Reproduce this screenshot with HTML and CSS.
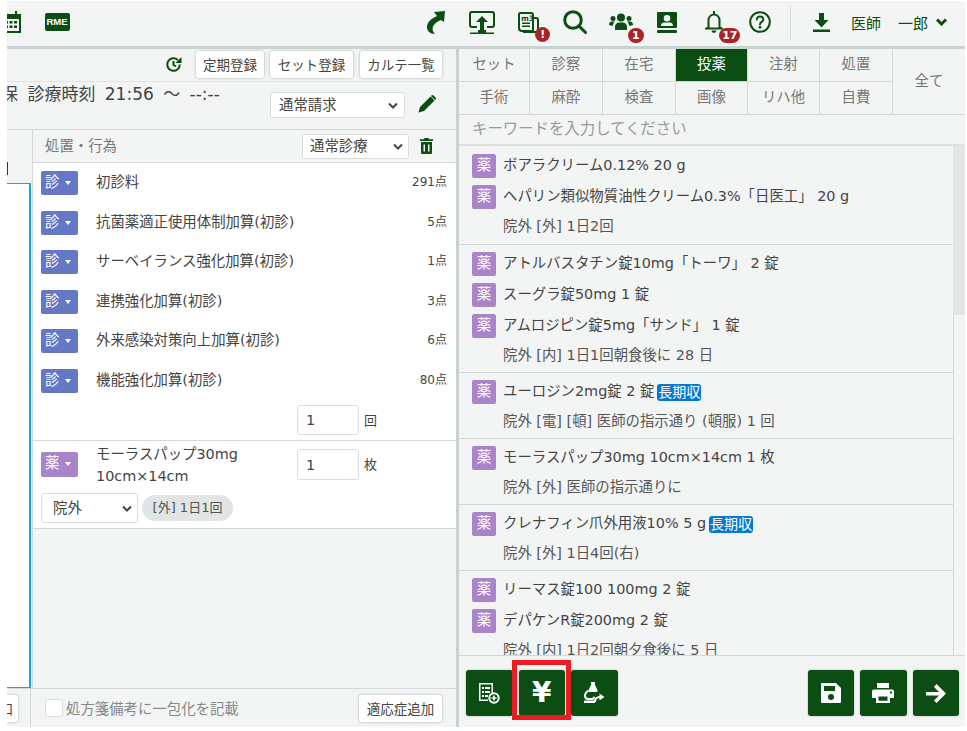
FILE: index.html
```html
<!DOCTYPE html>
<html lang="ja">
<head>
<meta charset="utf-8">
<title>カルテ</title>
<link rel="stylesheet" href="styles.css">
</head>
<body>
<div class="app">
  <header class="topbar">
    <div class="cell cell-cal"><svg width="20" height="22" viewBox="0 0 20 22"><path class="g" d="M4 0h2v3h8V0h2v3h4v19H0V3h4zM2 8v12h16V8z"/><path class="g" d="M4 10h3v2.500H4zM8.500 10h3v2.500h-3zM13 10h3v2.500h-3zM4 14.500h3V17H4zM8.500 14.500h3V17h-3zM13 14.500h3V17h-3z"/></svg></div>
    <div class="cell cell-rme"><span class="rme">RME</span></div>
    <div class="spacer"></div>
    <div class="cell"><svg width="18" height="23" viewBox="0 0 18 23"><path class="g" d="M18 0 7 1l3 4C3 8 0 12 0 16c0 4 3 7 8 7-3-3-3-7-1-9 2-3 5-4 7-5l3 2z"/></svg></div>
    <div class="cell"><svg width="26" height="23" viewBox="0 0 26 23"><path class="s" d="M8 16H3a2 2 0 0 1-2-2V3a2 2 0 0 1 2-2h20a2 2 0 0 1 2 2v11a2 2 0 0 1-2 2h-5"/><path class="g" d="M13 5l6 6h-4v8h2v2.500h8V23H1v-1.500h8V19h2v-8H7z"/></svg></div>
    <div class="cell has-badge"><svg width="23" height="21" viewBox="0 0 23 21"><path class="s" d="M3 1h11a2 2 0 0 1 2 2v16H5a3 3 0 0 1-3-3V2z"/><path class="s" d="M16 6h3a2 2 0 0 1 2 2v10a2 2 0 0 1-2 2H6"/><text class="m3" x="4" y="8.500">m3</text><path class="g" d="M5 10.500h8V12H5zM5 13.500h8V15H5z"/></svg><span class="badge badge-excl">!</span></div>
    <div class="cell"><svg width="24" height="24" viewBox="0 0 24 24"><circle class="s3" cx="10" cy="10" r="8.300"/><path class="s3 cap" d="M16 16l6.500 6.500"/></svg></div>
    <div class="cell has-badge"><svg width="24" height="18" viewBox="0 0 24 18"><circle class="g" cx="12" cy="4.500" r="4"/><circle class="g" cx="4" cy="5.500" r="2.500"/><circle class="g" cx="20" cy="5.500" r="2.500"/><path class="g" d="M6 17v-3c0-3 2-4.500 4-4.500h4c2 0 4 1.500 4 4.500v3zM0 12c0-2 1-3.500 3-3.500h3c-1.300 1-2 2.500-2.200 4.500zM24 12c0-2-1-3.500-3-3.500h-3c1.300 1 2 2.500 2.200 4.500z"/></svg><span class="badge badge-one">1</span></div>
    <div class="cell"><svg width="20" height="21" viewBox="0 0 20 21"><path class="g" fill-rule="evenodd" d="M1 0h18a1 1 0 0 1 1 1v14a1 1 0 0 1-1 1H1a1 1 0 0 1-1-1V1a1 1 0 0 1 1-1zm9 3a3.300 3.300 0 1 0 0 6.600A3.300 3.300 0 0 0 10 3zM4 14h12c0-2.500-1.500-3.500-3-3.500H7c-1.500 0-3 1-3 3.500z"/><rect class="g" y="18" width="20" height="3" rx="1"/></svg></div>
    <div class="cell has-badge"><svg width="18" height="22" viewBox="0 0 18 22"><path class="s" d="M3.500 16V9a5.500 5.500 0 0 1 11 0v7l2 1.500H1.500z"/><rect class="g" x="8" y="0" width="2" height="3"/><path class="g" d="M6.500 19.500h5a2.500 2.500 0 0 1-5 0z"/></svg><span class="badge badge-17">17</span></div>
    <div class="cell"><svg width="22" height="22" viewBox="0 0 22 22"><circle class="s" cx="11" cy="11" r="9.800"/><path class="s cap" d="M7.800 8.500C8 6.500 9.500 5.600 11 5.600c2 0 3.300 1.200 3.300 2.800 0 2.600-3.300 2.400-3.300 5"/><circle class="g" cx="11" cy="16.300" r="1.400"/></svg></div>
    <div class="vline"></div>
    <svg class="dl" width="17" height="19" viewBox="0 0 17 19"><path class="g" d="M6 0h5v7h4.500l-7 7.500-7-7.500H6zM0 16.500h17V19H0z"/></svg>
    <span class="user">医師</span>
    <span class="user user-name">一郎</span>
    <svg class="chev" width="11" height="8" viewBox="0 0 11 8"><path class="s3" d="M1 1.500l4.500 4.500L10 1.500"/></svg>
  </header>

  <main class="panes">
    <section class="left">
      <div class="tools">
        <svg width="17" height="17" viewBox="0 0 17 17"><path class="s" d="M14.800 8.500a6.300 6.300 0 1 1-2-4.600"/><path class="g" d="M16.500 1v6h-6z"/><path class="s" d="M8.500 5v4l2.500 1.500"/></svg>
        <button class="btn btn-a">定期登録</button>
        <button class="btn btn-b">セット登録</button>
        <button class="btn btn-c">カルテ一覧</button>
      </div>
      <div class="visit">
        <div class="visit-text">保&nbsp;診療時刻 21:56 〜 --:--</div>
        <select class="sel sel-claim"><option>通常請求</option></select>
        <svg class="pencil" width="18" height="18" viewBox="0 0 18 18"><path class="g" d="M12.500 1.500l4 4L6 16l-5.500 1.500L2 12zM13.500.5a1.500 1.500 0 0 1 2 0l2 2a1.500 1.500 0 0 1 0 2l-.5.500-4-4z"/></svg>
      </div>
      <div class="work">
        <aside class="side">
          <div class="side-head"><span class="side-frag"></span></div>
          <div class="side-box"></div>
        </aside>
        <div class="acts">
          <div class="acts-head">
            <span class="acts-title">処置・行為</span>
            <select class="sel sel-kind"><option>通常診療</option></select>
            <svg width="13" height="16" viewBox="0 0 13 16"><path class="g" d="M4.500 0h4l.7 1.300H13V3H0V1.300h3.800zM1 4h11v11a1 1 0 0 1-1 1H2a1 1 0 0 1-1-1zm2.500 2.500v7h1.500v-7zm4.500 0v7h1.500v-7z"/></svg>
          </div>
          <div class="acts-body">
            <div class="order order-first">
              <div class="act"><span class="kind kind-exam">診<i></i></span><span class="act-name">初診料</span><span class="pts">291点</span></div>
              <div class="act"><span class="kind kind-exam">診<i></i></span><span class="act-name">抗菌薬適正使用体制加算(初診)</span><span class="pts">5点</span></div>
              <div class="act"><span class="kind kind-exam">診<i></i></span><span class="act-name">サーベイランス強化加算(初診)</span><span class="pts">1点</span></div>
              <div class="act"><span class="kind kind-exam">診<i></i></span><span class="act-name">連携強化加算(初診)</span><span class="pts">3点</span></div>
              <div class="act"><span class="kind kind-exam">診<i></i></span><span class="act-name">外来感染対策向上加算(初診)</span><span class="pts">6点</span></div>
              <div class="act"><span class="kind kind-exam">診<i></i></span><span class="act-name">機能強化加算(初診)</span><span class="pts">80点</span></div>
              <div class="qty-row"><input class="qty" value="1"><span class="unit">回</span></div>
            </div>
            <div class="order order-drug">
              <div class="drug-top">
                <span class="kind kind-drug">薬<i></i></span>
                <span class="drug-name">モーラスパップ30mg<br>10cm×14cm</span>
                <input class="qty qty-drug" value="1"><span class="unit">枚</span>
              </div>
              <div class="drug-use">
                <select class="sel sel-out"><option>院外</option></select>
                <span class="chip">[外] 1日1回</span>
              </div>
            </div>
          </div>
        </div>
      </div>
      <footer class="foot">
        <div class="foot-side"><button class="btn btn-frag">口</button></div>
        <div class="foot-main">
          <label class="check"><span class="box"></span>処方箋備考に一包化を記載</label>
          <button class="btn btn-add">適応症追加</button>
        </div>
      </footer>
    </section>

    <section class="right">
      <nav class="tabs">
        <a>セット</a><a>診察</a><a>在宅</a><a class="on">投薬</a><a>注射</a><a>処置</a><a class="all">全て</a>
        <a>手術</a><a>麻酔</a><a>検査</a><a>画像</a><a>リハ他</a><a>自費</a>
      </nav>
      <div class="search">キーワードを入力してください</div>
      <div class="history">
        <div class="rx-list">
          <div class="rx rx-first">
            <div class="rx-row"><span class="mark">薬</span>ボアラクリーム0.12% 20 g</div>
            <div class="rx-row"><span class="mark">薬</span>ヘパリン類似物質油性クリーム0.3%「日医工」 20 g</div>
            <div class="rx-note">院外 [外] 1日2回</div>
          </div>
          <div class="rx">
            <div class="rx-row"><span class="mark">薬</span>アトルバスタチン錠10mg「トーワ」 2 錠</div>
            <div class="rx-row"><span class="mark">薬</span>スーグラ錠50mg 1 錠</div>
            <div class="rx-row"><span class="mark">薬</span>アムロジピン錠5mg「サンド」 1 錠</div>
            <div class="rx-note">院外 [内] 1日1回朝食後に 28 日</div>
          </div>
          <div class="rx">
            <div class="rx-row"><span class="mark">薬</span>ユーロジン2mg錠 2 錠<span class="long">長期収</span></div>
            <div class="rx-note">院外 [電] [頓] 医師の指示通り (頓服) 1 回</div>
          </div>
          <div class="rx">
            <div class="rx-row"><span class="mark">薬</span>モーラスパップ30mg 10cm×14cm 1 枚</div>
            <div class="rx-note">院外 [外] 医師の指示通りに</div>
          </div>
          <div class="rx">
            <div class="rx-row"><span class="mark">薬</span>クレナフィン爪外用液10% 5 g<span class="long">長期収</span></div>
            <div class="rx-note">院外 [外] 1日4回(右)</div>
          </div>
          <div class="rx">
            <div class="rx-row"><span class="mark">薬</span>リーマス錠100 100mg 2 錠</div>
            <div class="rx-row"><span class="mark">薬</span>デパケンR錠200mg 2 錠</div>
            <div class="rx-note">院外 [内] 1日2回朝夕食後に 5 日</div>
          </div>
        </div>
        <div class="track"><div class="thumb"></div></div>
      </div>
      <div class="actions">
        <button class="act-btn"><svg width="22" height="22" viewBox="0 0 22 22"><path class="wf" fill-rule="evenodd" d="M1 1h14v11h-1.500V2.500h-11v15H10V19H1zM4 5h2v2H4zM7 5h5v2H7zM4 9h2v2H4zM7 9h5v2H7zM4 13h2v2H4zM7 13h3v2H7z"/><circle class="ws" cx="16" cy="16" r="4.700"/><path class="wf" d="M15.200 13.500h1.600v1.700h1.700v1.600h-1.700v1.700h-1.600v-1.700h-1.700v-1.600h1.700z"/></svg></button>
        <button class="act-btn act-yen"><span class="yen">¥</span></button>
        <button class="act-btn"><svg width="22" height="23" viewBox="0 0 22 23"><path class="wf" d="M8 0h4v1.500h-.6l3 6.500c.5 1 0 2-1 2H6.600c-1 0-1.500-1-1-2l3-6.500H8z"/><path class="ws" d="M5.500 8.500C3 10 2 11.500 2 13.500c0 2 1.500 3.500 3.500 3.500H9c1 0 2-1 2-2.200"/><path class="wf" d="M1 18.500h11V21H1z"/><path class="ws" d="M12 20c0-3 1.500-5 5-5"/><path class="wf" d="M16.500 11.500l5 3.500-5 3.500z"/></svg></button>
        <div class="spacer"></div>
        <button class="act-btn"><svg width="20" height="20" viewBox="0 0 20 20"><path class="wf" fill-rule="evenodd" d="M1 0h14l5 5v14a1 1 0 0 1-1 1H1a1 1 0 0 1-1-1V1a1 1 0 0 1 1-1zm2 3v5h11V3zm7 8a3 3 0 1 0 0 6 3 3 0 0 0 0-6z"/></svg></button>
        <button class="act-btn"><svg width="22" height="20" viewBox="0 0 22 20"><path class="wf" fill-rule="evenodd" d="M5 0h12v5H5zM2 6.500h18a2 2 0 0 1 2 2V15h-4v5H4v-5H0V8.500a2 2 0 0 1 2-2zM6.500 13.500v4.300h9v-4.300zM18 8.500v2h2v-2z"/></svg></button>
        <button class="act-btn"><svg width="22" height="19" viewBox="0 0 22 19"><path class="wf" d="M11.500 0l9.500 9.500-9.500 9.500-2.500-2.500 5-5H1V8h13L9 3z"/></svg></button>
      </div>
    </section>
  </main>
</div>
</body>
</html>
```

FILE: styles.css
```css
* { box-sizing: border-box; }
html, body { margin: 0; padding: 0; height: 100%; overflow: hidden; background: #fff; }
body { font-family: "DejaVu Sans", "Noto Sans CJK JP", sans-serif; font-size: 14.400px; color: #444; }
button, select, input { font-family: inherit; }

.app { margin: 1px 2px 0 7px; height: 726px; display: flex; flex-direction: column; overflow: hidden; background: #f3f5f4; }

.g { fill: #0b4d12; }
.s { fill: none; stroke: #0b4d12; stroke-width: 2; }
.s3 { fill: none; stroke: #0b4d12; stroke-width: 3; }
.cap { stroke-linecap: round; }
.m3 { font-size: 7.500px; font-weight: 700; fill: #0b4d12; font-family: "DejaVu Sans", sans-serif; }
.wf { fill: #fff; }
.ws { fill: none; stroke: #fff; stroke-width: 2; }

.topbar { height: 45px; flex: none; display: flex; align-items: center; padding: 0 12px 3px 0; }
.cell { position: relative; width: 46.300px; height: 42px; flex: none; display: flex; align-items: center; justify-content: center; }
.cell-cal { margin-left: -16px; margin-right: 3px; width: 40px; }
.cell-rme { width: 46px; }
.rme { display: block; width: 25px; height: 18px; border-radius: 2px; background: #0b4d12; color: #fff; font-size: 9.500px; font-weight: 700; line-height: 18px; text-align: center; font-family: "Liberation Sans", sans-serif; }
.spacer { flex: 1; }
.badge { position: absolute; background: #a92329; color: #fff; font-weight: 700; font-size: 11px; line-height: 15px; height: 15px; text-align: center; border-radius: 8px; font-family: "DejaVu Sans", sans-serif; }
.badge-excl { width: 15px; left: 30px; top: 26px; }
.badge-one { width: 16px; left: 30px; top: 27px; }
.badge-17 { width: 21px; left: 29px; top: 27px; }
.vline { width: 1px; height: 33px; background: #d9dedc; margin: 0 22px 0 7px; flex: none; }
.dl { flex: none; margin-right: 21px; }
.user { color: #0b4d12; font-size: 15px; margin-right: 17px; flex: none; }
.user-name { margin-right: 8px; }
.chev { flex: none; margin-right: 6px; }

.panes { flex: 1; min-height: 0; display: flex; border-top: 3px solid #c9d3d0; }
.left { width: 452px; flex: none; display: flex; flex-direction: column; border-right: 3px solid #c9d3d0; }
.right { flex: 1; min-width: 0; display: flex; flex-direction: column; }

.tools { height: 33px; flex: none; display: flex; align-items: center; justify-content: flex-end; padding: 0 14px 2px 0; border-bottom: 1px solid #e0e5e3; }
.tools svg { margin-right: 14px; }
.btn { background: #fff; border: 0; border-radius: 3px; box-shadow: 0 0 3px rgba(0,0,0,.3); color: #444; font-size: 13.500px; height: 27px; padding: 0; white-space: nowrap; flex: none; }
.btn-a { width: 68px; margin-right: 6px; }
.btn-b { width: 83px; margin-right: 7px; }
.btn-c { width: 82px; }

.visit { height: 48px; flex: none; display: flex; align-items: flex-start; border-bottom: 1px solid #d3d9d7; overflow: hidden; }
.visit-text { flex: 1; margin-left: -6px; font-size: 17px; word-spacing: 4px; line-height: 22px; margin-top: 1px; white-space: nowrap; color: #444; }
.sel { appearance: none; -webkit-appearance: none; background-color: #fff; background-repeat: no-repeat; background-image: url("data:image/svg+xml,%3Csvg xmlns='http://www.w3.org/2000/svg' width='10' height='7' viewBox='0 0 10 7'%3E%3Cpath d='M1 1.500l4 4 4-4' fill='none' stroke='%23444' stroke-width='2'/%3E%3C/svg%3E"); border: 1px solid #d9dedc; border-radius: 3px; color: #444; font-size: 14.400px; outline: 0; flex: none; }
.sel-claim { width: 135px; height: 26px; margin-top: 10px; padding: 0 0 0 8px; background-position: right 6px center; }
.pencil { margin: 13px 20px 0 13px; flex: none; }

.work { flex: 1; min-height: 0; display: flex; }
.side { width: 25px; flex: none; display: flex; flex-direction: column; }
.side-head { height: 53px; flex: none; }
.side-frag { display: block; width: 1px; height: 13px; margin-top: 32px; background: #0b4d12; }
.side-box { flex: 1; background: #fff; border: solid #17a8d8; border-width: 1px 2px 1px 0; margin-right: 1px; }
.acts { flex: 1; min-width: 0; display: flex; flex-direction: column; border-left: 1px solid #d3d9d7; }
.acts-head { height: 33px; flex: none; display: flex; align-items: center; border-bottom: 1px solid #d3d9d7; padding-left: 12px; }
.acts-title { width: 257px; color: #777; flex: none; margin-top: -3px; }
.sel-kind { width: 107px; height: 25px; padding: 0 0 0 7px; margin-right: 11px; background-position: right 5px center; }
.acts-body { flex: 1; min-height: 0; }
.order { background: #fff; border-bottom: 1px solid #d3d9d7; }
.order-first { height: 278px; padding-top: 8px; }
.act { height: 39.600px; display: flex; align-items: flex-start; padding: 0 9px 0 8px; }
.kind { position: relative; width: 37px; height: 24px; flex: none; border-radius: 2px; color: #fff; line-height: 22px; padding-left: 4px; }
.kind i { position: absolute; right: 7px; top: 10px; width: 0; height: 0; border: solid transparent; border-width: 4px 3.500px 0; border-top-color: #fff; }
.kind-exam { background: #6478c6; }
.kind-drug { background: #a984c9; }
.act-name { margin-left: 18px; flex: 1; line-height: 22px; white-space: nowrap; }
.pts { font-size: 12px; line-height: 22px; color: #444; }
.qty-row { display: flex; align-items: center; margin: -4px 0 0 264px; }
.qty { width: 62px; height: 30px; border: 1px solid #d9dedc; border-radius: 3px; padding: 0 8px; color: #444; font-size: 14.400px; outline: 0; background: #fff; flex: none; }
.unit { margin-left: 5px; font-size: 13px; }
.order-drug { height: 88px; padding: 8px 0 0 8px; }
.drug-top { display: flex; align-items: flex-start; height: 44px; }
.drug-top .kind { margin-top: 3px; height: 25px; }
.drug-name { width: 201px; margin-left: 18px; line-height: 22px; flex: none; margin-top: -8px; padding-top: 2px; white-space: nowrap; }
.qty-drug { height: 31px; }
.drug-top .unit { line-height: 31px; }
.drug-use { display: flex; align-items: center; gap: 4px; }
.sel-out { width: 97px; height: 30px; padding: 0 0 0 11px; background-position: right 5px center; }
.chip { height: 26px; line-height: 26px; width: 91px; border-radius: 13px; background: #e1e6e4; font-size: 13px; text-align: center; color: #555; white-space: nowrap; }

.foot { height: 39px; flex: none; display: flex; border-top: 1px solid #d3d9d7; }
.foot-side { width: 24px; flex: none; display: flex; align-items: center; overflow: hidden; border-right: 1px solid #d3d9d7; }
.btn-frag { width: 11px; text-indent: -12px; overflow: hidden; border-radius: 0 3px 3px 0; }
.foot-main { flex: 1; display: flex; align-items: center; justify-content: space-between; padding: 0 14px; }
.check { display: flex; align-items: center; color: #888; font-size: 14.400px; margin-top: -1px; }
.box { width: 18px; height: 18px; background: #fff; border: 1px solid #d9dedc; border-radius: 3px; margin-right: 3px; }
.btn-add { width: 83px; }

.tabs { flex: none; display: grid; grid-template-columns: 71px 73px 73px 72px 72px 73px 1fr; grid-template-rows: 33px 33px; }
.tabs a { display: flex; align-items: center; justify-content: center; padding-bottom: 5px; color: #777; font-size: 14.400px; border-right: 1px solid #d3d9d7; border-bottom: 1px solid #d3d9d7; }
.tabs .on { background: #0b4d12; color: #fff; }
.tabs .all { grid-column: 7; grid-row: 1 / span 2; border-right: 0; }
.search { height: 31px; flex: none; border-bottom: 2px solid #dde2e0; padding-left: 13px; line-height: 29px; color: #999; font-size: 15.400px; }
.history { height: 510px; flex: none; display: flex; overflow: hidden; border-bottom: 1px solid #d3d9d7; }
.rx-list { flex: 1; min-width: 0; overflow: hidden; }
.rx { padding: 6.500px 0 6.500px 13px; border-bottom: 1px solid #d3d9d7; }
.rx-first { padding-top: 8px; padding-bottom: 7px; }
.rx-row { height: 31px; display: flex; align-items: flex-start; white-space: pre; line-height: 22px; color: #444; }
.mark { width: 24px; height: 24px; border-radius: 2px; background: #a984c9; color: #fff; line-height: 22px; text-align: center; margin-right: 7px; flex: none; }
.long { background: #0678d4; color: #fff; height: 17px; line-height: 16px; font-size: 14px; border-radius: 3px; padding: 0 1px; margin: 4px 0 0 3px; }
.rx-note { padding-left: 31px; line-height: 21px; color: #555; }
.track { width: 12px; flex: none; border-left: 1px solid #d3d9d7; }
.thumb { height: 169px; margin-left: -1px; background: #e4e6e5; }
.actions { flex: 1; display: flex; align-items: flex-start; padding: 14px 6px 0 7px; gap: 6px; }
.act-btn { width: 46.500px; height: 46px; background: #0b4d12; border: 0; border-radius: 3px; box-shadow: 0 0 2px rgba(0,0,0,.3); display: flex; align-items: center; justify-content: center; padding: 0; flex: none; position: relative; }
.act-yen::after { content: ""; position: absolute; left: -6.500px; right: -6px; top: -10px; bottom: -4px; border: 5px solid #ed1c24; pointer-events: none; }
.yen { color: #fff; font-size: 28px; font-weight: 700; line-height: 1; font-family: "DejaVu Sans", sans-serif; }
```
